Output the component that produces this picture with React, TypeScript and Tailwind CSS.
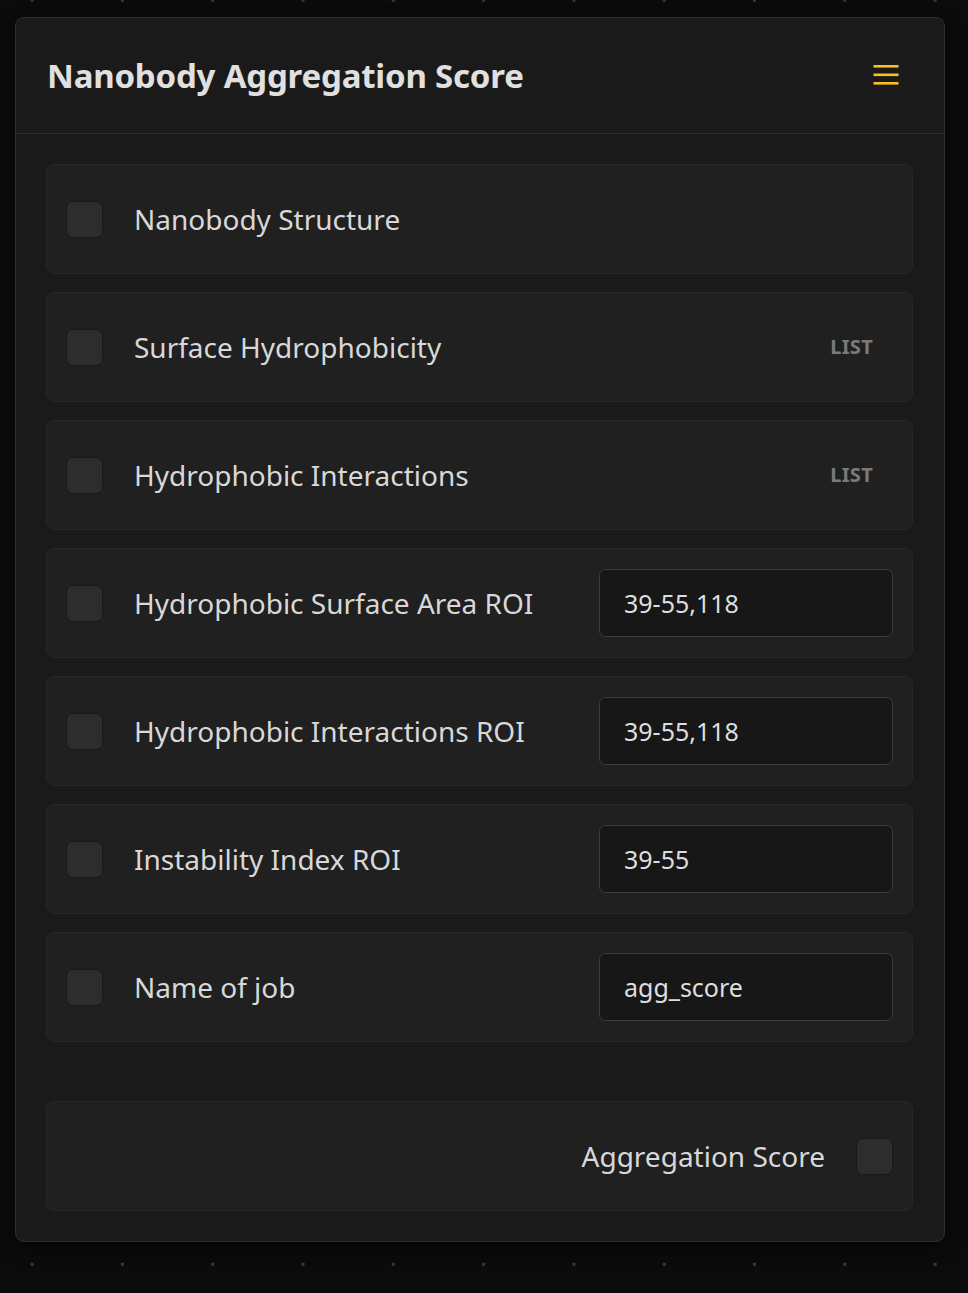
import type { ReactNode } from 'react'

type Field = {
  label: string
  value?: string
  list?: boolean
}

const FIELDS: Field[] = [
  { label: 'Nanobody Structure' },
  { label: 'Surface Hydrophobicity', list: true },
  { label: 'Hydrophobic Interactions', list: true },
  { label: 'Hydrophobic Surface Area ROI', value: '39-55,118' },
  { label: 'Hydrophobic Interactions ROI', value: '39-55,118' },
  { label: 'Instability Index ROI', value: '39-55' },
  { label: 'Name of job', value: 'agg_score' },
]

function Handle() {
  return <span className="block h-[37px] w-[37px] shrink-0 rounded-[7px] border border-[#181818] bg-[#2d2d2d]" />
}

function Row({ children }: { children: ReactNode }) {
  return (
    <div className="flex h-[110px] items-center rounded-[8px] border border-[#262626] bg-[#202020] px-[19px]">
      {children}
    </div>
  )
}

export default function App() {
  return (
    <div
      className="min-h-[1293px] bg-[#0b0b0b] bg-[radial-gradient(circle,#3a3a3a_1.6px,transparent_2px)] bg-[size:90.3px_90.3px] bg-[position:-13px_-45px] pl-[15px] pt-[17px] pb-[50px]"
      style={{ fontFamily: '"Noto Sans", "Open Sans", sans-serif' }}
    >
      <section className="w-[930px] rounded-[9px] border border-[#2e2e2e] bg-[#1a1a1a] shadow-[0_6px_16px_rgba(0,0,0,0.5)]">
        <header className="flex h-[116px] items-center justify-between border-b border-[#2e2e2e] pl-[31px] pr-[45px]">
          <h1 className="text-[33px] font-bold tracking-[-0.2px] text-[#e0e0e0]">Nanobody Aggregation Score</h1>
          <svg width="26" height="20" viewBox="0 0 26 20" className="mt-[-2px]">
            <rect x="0.5" y="0" width="25" height="2.6" fill="#fbbf24" />
            <rect x="0.5" y="8.5" width="25" height="2.6" fill="#fbbf24" />
            <rect x="0.5" y="17" width="25" height="2.6" fill="#fbbf24" />
          </svg>
        </header>

        <div className="pl-[30px] pr-[31px] pt-[30px] pb-[30px]">
          <div className="flex flex-col gap-[18px]">
            {FIELDS.map(field => (
              <Row key={field.label}>
                <Handle />
                <span className="ml-[31px] flex-1 whitespace-nowrap text-[28px] text-[#d8d8d8]">{field.label}</span>
                {field.list && <span className="mr-[20px] text-[20px] font-bold tracking-[0.3px] text-[#7a7a7a]">LIST</span>}
                {field.value && (
                  <input
                    readOnly
                    value={field.value}
                    className="h-[68px] w-[294px] rounded-[6px] border border-[#3b3b3b] bg-[#171717] px-6 text-[25px] text-[#dedede] outline-none"
                  />
                )}
              </Row>
            ))}
          </div>

          <div className="mt-[59px]">
            <Row>
              <span className="flex-1 text-right text-[28px] text-[#d8d8d8]">Aggregation Score</span>
              <span className="ml-[31px]"><Handle /></span>
            </Row>
          </div>
        </div>
      </section>
    </div>
  )
}
